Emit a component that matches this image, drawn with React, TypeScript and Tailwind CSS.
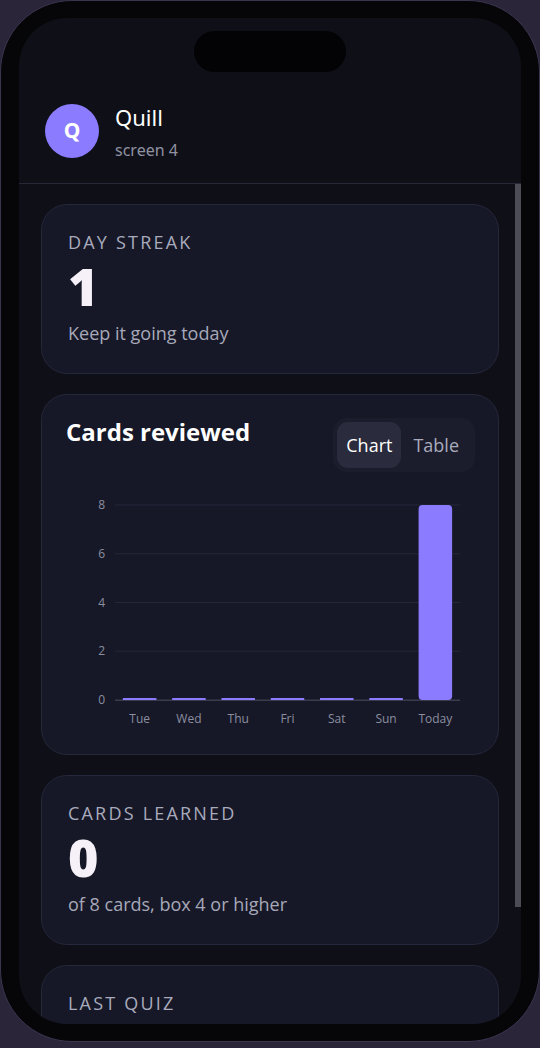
import React from "react";

const days = [
  { label: "Tue", value: 0 },
  { label: "Wed", value: 0 },
  { label: "Thu", value: 0 },
  { label: "Fri", value: 0 },
  { label: "Sat", value: 0 },
  { label: "Sun", value: 0 },
  { label: "Today", value: 8 },
];

function StatCard({ label, value, note }: { label: string; value: string; note?: string }) {
  return (
    <div className="rounded-[26px] border border-[#25273a] bg-[#161827] px-[26px] pt-[25px] pb-[28px]">
      <div className="text-[18px] leading-6 tracking-[2.2px] text-[#a9abbd]">{label}</div>
      <div className="mt-[4px] text-[52px] font-extrabold leading-[56px] text-[#f6f1f8]">{value}</div>
      {note && <div className="mt-[7px] text-[18px] leading-6 text-[#a7a8b9]">{note}</div>}
    </div>
  );
}

function ReviewChart() {
  const left = 49;
  const right = 394;
  const top = 19;
  const bottom = 214;
  const max = 8;
  const slot = (right - left) / days.length;
  const barW = slot * 0.68;
  const y = (v: number) => bottom - (v / max) * (bottom - top);

  return (
    <svg width="408" height="245" viewBox="0 0 408 245" className="mt-[14px] block">
      {[0, 2, 4, 6, 8].map((t) => (
        <g key={t}>
          <line
            x1={left}
            x2={right}
            y1={y(t)}
            y2={y(t)}
            stroke={t === 0 ? "#3a3c4d" : "#24263a"}
            strokeWidth="1"
          />
          <text x={39} y={y(t) + 4} textAnchor="end" fontSize="12" fill="#8c8ea0">
            {t}
          </text>
        </g>
      ))}
      {days.map((d, i) => {
        const cx = left + slot * i + slot / 2;
        const h = Math.max(2, (d.value / max) * (bottom - top));
        return (
          <g key={d.label}>
            <rect x={cx - barW / 2} y={bottom - h} width={barW} height={h} rx={d.value ? 4 : 0} fill="#8a7bff" />
            <text x={cx} y={237} textAnchor="middle" fontSize="12" fill="#8c8ea0">
              {d.label}
            </text>
          </g>
        );
      })}
      <rect x={left} y={bottom} width={right - left} height="1" fill="#3a3c4d" />
    </svg>
  );
}

export default function App() {
  return (
    <div
      className="h-[1048px] w-[540px] overflow-hidden bg-[#2a2538]"
      style={{ fontFamily: "'Open Sans', 'Noto Sans', sans-serif" }}
    >
      <div className="h-[1042px] w-full rounded-[72px] border border-[#3b3550] bg-[#060609] px-[18px] pt-[17px] pb-[17px]">
        <div className="relative flex h-full flex-col overflow-hidden rounded-[48px] bg-[#0f1017]">
          {/* Header */}
          <div className="border-b border-[#262836] pb-[25px] font-['Noto_Sans',sans-serif]">
            <div className="mx-auto mt-[13px] h-[41px] w-[152px] rounded-full bg-[#030305]" />
            <div className="mt-[32px] flex h-[54px] items-center gap-[16px] pl-[26px]">
              <div className="flex h-[54px] w-[54px] items-center justify-center rounded-full bg-[#8b7bff] text-[21px] font-bold text-white">
                Q
              </div>
              <div>
                <div className="text-[22px] leading-7 text-white">Quill</div>
                <div className="mt-[9px] text-[16px] leading-5 text-[#9092a2]">screen 4</div>
              </div>
            </div>
          </div>

          {/* Scroll content */}
          <div className="relative flex-1 overflow-hidden">
            <div className="flex flex-col gap-[20px] px-[22px] pt-[20px]">
              <StatCard label="DAY STREAK" value="1" note="Keep it going today" />

              <div className="rounded-[26px] border border-[#25273a] bg-[#161827] pl-[24px] pr-[23px] pt-[21px] pb-[23px]">
                <div className="flex items-start justify-between">
                  <div className="text-[24px] font-bold leading-8 text-white">Cards reviewed</div>
                  <div className="mt-[2px] flex rounded-[14px] bg-[#1b1d2c] p-[4px]">
                    <div className="rounded-[11px] bg-[#2a2c3e] px-[9px] py-[10px] text-[18px] leading-[26px] text-white">
                      Chart
                    </div>
                    <div className="px-[12px] py-[10px] text-[18px] leading-[26px] text-[#a9abbd]">Table</div>
                  </div>
                </div>
                <ReviewChart />
              </div>

              <StatCard label="CARDS LEARNED" value="0" note="of 8 cards, box 4 or higher" />
              <StatCard label="LAST QUIZ" value="0/0" />
            </div>
            <div className="absolute right-0 top-0 h-[723px] w-[6px] bg-[#4b4c55]" />
          </div>
        </div>
      </div>
    </div>
  );
}
